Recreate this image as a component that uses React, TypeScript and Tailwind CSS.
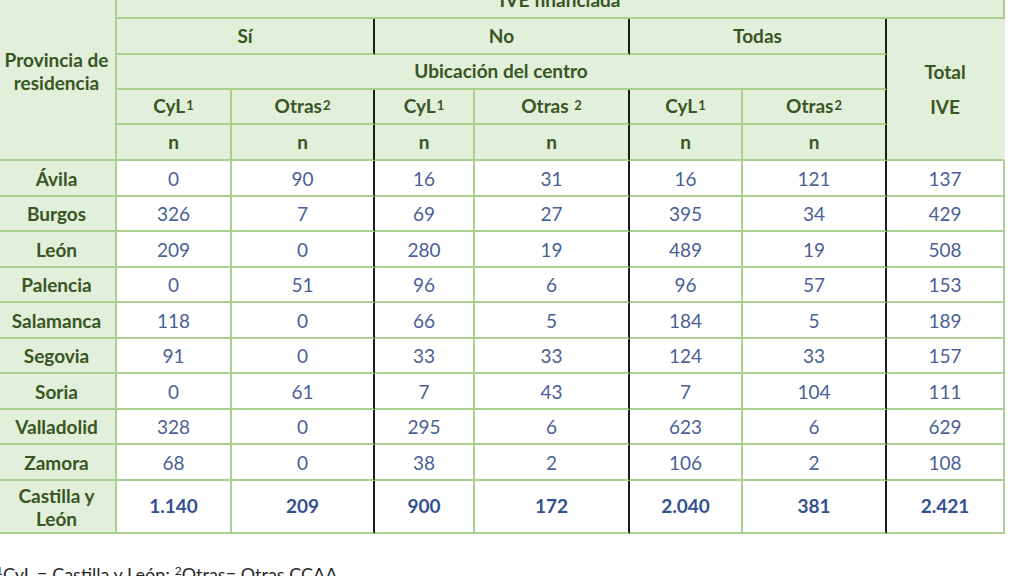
import React from 'react';

const font = { fontFamily: 'Lato, "Open Sans", sans-serif' };

const rows = [
  { name: 'Ávila', v: ['0', '90', '16', '31', '16', '121', '137'] },
  { name: 'Burgos', v: ['326', '7', '69', '27', '395', '34', '429'] },
  { name: 'León', v: ['209', '0', '280', '19', '489', '19', '508'] },
  { name: 'Palencia', v: ['0', '51', '96', '6', '96', '57', '153'] },
  { name: 'Salamanca', v: ['118', '0', '66', '5', '184', '5', '189'] },
  { name: 'Segovia', v: ['91', '0', '33', '33', '124', '33', '157'] },
  { name: 'Soria', v: ['0', '61', '7', '43', '7', '104', '111'] },
  { name: 'Valladolid', v: ['328', '0', '295', '6', '623', '6', '629'] },
  { name: 'Zamora', v: ['68', '0', '38', '2', '106', '2', '108'] },
];

const heights = ['h-[36px]', 'h-[35px]', 'h-[36px]', 'h-[35px]', 'h-[36px]', 'h-[35px]', 'h-[36px]', 'h-[35px]', 'h-[36px]'];

// columns after which a black separator is drawn
const blackAfter = [1, 3, 5];

const head = 'bg-[#e2efda] text-[#375623] font-bold text-[19px] text-center border-b-2 border-r-2 border-b-[#a9d08e] p-0';

function Sup({ children }: { children: React.ReactNode }) {
  return <sup className="text-[13px] relative -top-[3px] ml-[1px]">{children}</sup>;
}

export default function App() {
  const subHeads: React.ReactNode[] = [
    <>CyL<Sup>1</Sup></>,
    <>Otras<Sup>2</Sup></>,
    <>CyL<Sup>1</Sup></>,
    <>Otras <Sup>2</Sup></>,
    <>CyL<Sup>1</Sup></>,
    <>Otras<Sup>2</Sup></>,
  ];

  const rBorder = (i: number) => (blackAfter.includes(i) ? 'border-r-[#1c1c1c]' : 'border-r-[#a9d08e]');

  return (
    <div className="w-[1024px] h-[576px] overflow-hidden bg-white" style={font}>
      <table className="table-fixed border-separate border-spacing-0 mt-[-18px] ml-[-2px] w-[1007px]">
        <colgroup>
          <col className="w-[119px]" />
          <col className="w-[115px]" />
          <col className="w-[143px]" />
          <col className="w-[100px]" />
          <col className="w-[155px]" />
          <col className="w-[113px]" />
          <col className="w-[144px]" />
          <col className="w-[118px]" />
        </colgroup>
        <thead>
          <tr className="h-[37px]">
            <th rowSpan={5} className={`${head} border-r-[#a9d08e] leading-[23px]`}>
              Provincia de
              <br />
              residencia
            </th>
            <th colSpan={7} className={`${head} border-r-[#a9d08e] border-t-2 border-t-[#a9d08e]`}>
              IVE financiada
            </th>
          </tr>
          <tr className="h-[36px]">
            <th colSpan={2} className={`${head} border-r-[#1c1c1c]`}>Sí</th>
            <th colSpan={2} className={`${head} border-r-[#1c1c1c]`}>No</th>
            <th colSpan={2} className={`${head} border-r-[#1c1c1c]`}>Todas</th>
            <th rowSpan={4} className={`${head} border-r-[#e2efda] leading-[35px]`}>
              Total
              <br />
              IVE
            </th>
          </tr>
          <tr className="h-[35px]">
            <th colSpan={6} className={`${head} border-r-[#1c1c1c]`}>Ubicación del centro</th>
          </tr>
          <tr className="h-[35px]">
            {subHeads.map((s, i) => (
              <th key={i} className={`${head} ${rBorder(i)}`}>{s}</th>
            ))}
          </tr>
          <tr className="h-[36px]">
            {subHeads.map((_, i) => (
              <th key={i} className={`${head} ${rBorder(i)}`}>n</th>
            ))}
          </tr>
        </thead>
        <tbody>
          {rows.map((r, ri) => (
            <tr key={r.name} className={heights[ri]}>
              <td className="bg-[#e2efda] text-[#375623] font-bold text-[19px] leading-[23px] text-center border-b-2 border-r-2 border-[#a9d08e] p-0">
                {r.name}
              </td>
              {r.v.map((v, i) => (
                <td
                  key={i}
                  className={`bg-white text-[#4a5f96] text-[19px] leading-[23px] text-center border-b-2 border-r-2 border-b-[#a9d08e] p-0 ${i === 6 ? 'border-r-[#a9d08e]' : rBorder(i)}`}
                >
                  {v}
                </td>
              ))}
            </tr>
          ))}
          <tr className="h-[53px]">
            <td className="bg-[#e2efda] text-[#375623] font-bold text-[19px] leading-[23px] text-center border-b-2 border-r-2 border-[#a9d08e] p-0">
              Castilla y
              <br />
              León
            </td>
            {['1.140', '209', '900', '172', '2.040', '381', '2.421'].map((v, i) => (
              <td
                key={i}
                className={`bg-white text-[#34508f] font-bold text-[19px] text-center border-b-2 border-r-2 border-b-[#a9d08e] p-0 ${i === 6 ? 'border-r-[#a9d08e]' : rBorder(i)}`}
              >
                {v}
              </td>
            ))}
          </tr>
        </tbody>
      </table>
      <p className="mt-[29px] ml-[-4px] text-[18px] text-[#262626] leading-[22px] whitespace-nowrap">
        <sup className="text-[12px]">1</sup>CyL = Castilla y León; <sup className="text-[12px]">2</sup>Otras= Otras CCAA
      </p>
    </div>
  );
}
